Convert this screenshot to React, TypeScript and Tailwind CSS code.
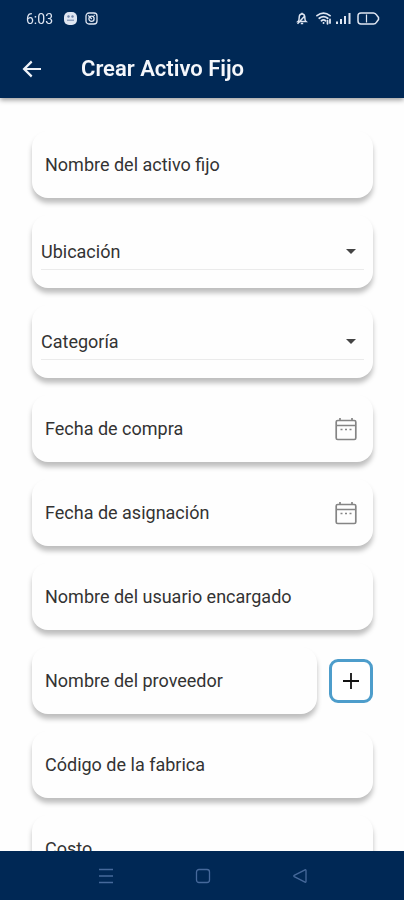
import type { ReactNode } from "react";

type Field = {
  name: string;
  label: string;
  kind: "text" | "select" | "date" | "add";
};

const fields: Field[] = [
  { name: "nombre", label: "Nombre del activo fijo", kind: "text" },
  { name: "ubicacion", label: "Ubicación", kind: "select" },
  { name: "categoria", label: "Categoría", kind: "select" },
  { name: "compra", label: "Fecha de compra", kind: "date" },
  { name: "asignacion", label: "Fecha de asignación", kind: "date" },
  { name: "encargado", label: "Nombre del usuario encargado", kind: "text" },
  { name: "proveedor", label: "Nombre del proveedor", kind: "add" },
  { name: "codigo", label: "Código de la fabrica", kind: "text" },
  { name: "costo", label: "Costo", kind: "text" },
];

function StatusBar() {
  return (
    <div className="flex h-9 items-center justify-between pr-6 pl-[26px] pt-px text-[#dfe6f2]">
      <div className="flex items-center gap-2">
        <span className="w-[30px] text-sm">6:03</span>
        <svg className="h-[13px] w-[13px]" viewBox="0 0 13 13">
          <rect width="13" height="13" rx="5" fill="currentColor" />
          <circle cx="4.5" cy="4.5" r="1.2" fill="#6f85a8" />
          <circle cx="8.5" cy="4.5" r="1.2" fill="#6f85a8" />
          <path d="M3 8.2h7" stroke="#6f85a8" strokeWidth="1" />
        </svg>
        <svg
          className="h-[13px] w-[13px]"
          viewBox="0 0 13 13"
          fill="none"
          stroke="currentColor"
          strokeWidth="1.3"
        >
          <rect x="1" y="1" width="11" height="11" rx="3" />
          <circle cx="6.5" cy="6.8" r="2.6" />
          <path d="M3.2 3.4l3.6 3.6M8.6 3.4h1.2" />
        </svg>
      </div>

      <div className="flex items-center gap-1">
        {/* Muted bell */}
        <svg
          className="h-[13px] w-3"
          viewBox="0 0 12 13"
          fill="none"
          stroke="currentColor"
          strokeWidth="1.5"
        >
          <path d="M2 9.5c1.2-1 1.2-2 1.2-4C3.2 3.4 4.4 2 6 2s2.8 1.4 2.8 3.5c0 2 0 3 1.2 4z" />
          <path d="M6 .8V2M4.8 11.6h2.4M1.5 11.8L8.8 4" />
        </svg>
        {/* Wi-Fi */}
        <svg
          className="ml-1 h-[13px] w-4"
          viewBox="0 0 16 13"
          fill="none"
          stroke="currentColor"
          strokeWidth="1.8"
          strokeLinecap="round"
        >
          <path d="M1 3.6C5 .6 10 .6 14 3.6M3.3 6.2c2.6-2 5.8-2 8.4 0M5.5 8.7c1.3-1 2.7-1 4 0" />
          <path d="M7.5 11h.1M11.5 11.8V8.6M14 7.5v3.5" />
        </svg>
        <svg className="h-[13px] w-4" viewBox="0 0 16 13" fill="currentColor">
          <rect x="0" y="9.5" width="2" height="2.5" />
          <rect x="4" y="7" width="2" height="5" />
          <rect x="8" y="4" width="2" height="8" />
          <rect x="12.5" y="1" width="2" height="11" />
        </svg>
        <svg
          className="h-[13px] w-6"
          viewBox="0 0 24 13"
          fill="none"
          stroke="currentColor"
          strokeWidth="1.5"
        >
          <path d="M5 1h12.500c2 0 2.500 1 3.500 2.500l1.500 2v2l-1.500 2C20 11 19.500 12 17.500 12H5c-2 0-3-1.200-3-3V4c0-1.800 1-3 3-3z" />
          <path d="M10.500 2.500v8" strokeWidth="1.2" />
        </svg>
      </div>
    </div>
  );
}

function Header() {
  return (
    <header className="z-10 shrink-0 bg-[#002855] shadow-[0_2px_5px_rgba(0,0,0,0.4)]">
      <StatusBar />
      <div className="flex h-[62px] items-center px-5 pt-1">
        <button type="button" aria-label="Volver" className="text-[#eef2f8]">
          <svg className="h-6 w-6" viewBox="0 0 24 24" fill="currentColor">
            <path d="M21 11H6.800l5.600-5.600L11 3.500 2.500 12l8.500 8.500 1.400-1.900L6.800 13H21z" />
          </svg>
        </button>
        <h1 className="ml-[37px] text-[22px] leading-7 font-semibold text-[#f5f7fb]">
          Crear Activo Fijo
        </h1>
      </div>
    </header>
  );
}

function Card({ children }: { children: ReactNode }) {
  return (
    <div className="min-w-0 flex-1 rounded-2xl bg-[#fefefe] shadow-[0_5px_5px_rgba(0,0,0,0.25)]">
      {children}
    </div>
  );
}

function SelectField({ field }: { field: Field }) {
  return (
    <Card>
      <div className="h-[73px] px-[9px] pt-[19px]">
        <div className="flex h-9 items-center border-b border-[#ebebeb] pr-2">
          <select
            name={field.name}
            aria-label={field.label}
            className="min-w-0 flex-1 appearance-none bg-transparent text-lg leading-6 text-[#333] outline-none"
          >
            <option>{field.label}</option>
          </select>
          <svg className="h-[5px] w-[10px]" viewBox="0 0 10 5" fill="#444">
            <path d="M0 0h10L5 5z" />
          </svg>
        </div>
      </div>
    </Card>
  );
}

function CalendarIcon() {
  return (
    <svg
      className="h-6 w-[22px]"
      viewBox="0 0 22 24"
      fill="none"
      stroke="#858585"
      strokeWidth="1.7"
    >
      <rect x="1.2" y="3.5" width="19.6" height="19" rx="1.5" />
      <path d="M1 8.5h20M5 3.5V1M17 3.5V1" />
      <path d="M5.5 12.5h2M10 12.5h2M14.5 12.5h2" />
    </svg>
  );
}

function TextField({ field }: { field: Field }) {
  return (
    <Card>
      <div className="flex h-[67px] items-center px-[13px]">
        <input
          type="text"
          name={field.name}
          aria-label={field.label}
          placeholder={field.label}
          className="min-w-0 flex-1 bg-transparent text-lg leading-6 text-[#222] outline-none placeholder:text-[#333]"
        />
        {field.kind === "date" && (
          <button type="button" aria-label="Abrir calendario" className="mr-[3px]">
            <CalendarIcon />
          </button>
        )}
      </div>
    </Card>
  );
}

function NavBar() {
  return (
    <nav className="flex h-[49px] shrink-0 items-center justify-center gap-[81px] bg-[#002855] pl-px text-[#46699b]">
      <button type="button" aria-label="Recientes">
        <svg
          className="h-4 w-4"
          viewBox="0 0 16 16"
          stroke="currentColor"
          strokeWidth="1.3"
        >
          <path d="M1 1.5h14M1 8h14M1 14.5h14" />
        </svg>
      </button>
      <button type="button" aria-label="Inicio">
        <svg
          className="h-4 w-4"
          viewBox="0 0 16 16"
          fill="none"
          stroke="currentColor"
          strokeWidth="1.3"
        >
          <rect x="1.5" y="1.5" width="13" height="13" rx="2.5" />
        </svg>
      </button>
      <button type="button" aria-label="Atrás">
        <svg
          className="h-4 w-4"
          viewBox="0 0 16 16"
          fill="none"
          stroke="currentColor"
          strokeWidth="1.3"
          strokeLinejoin="round"
        >
          <path d="M13 1.8L2.2 7.4c-.5.3-.5.9 0 1.2L13 14.2c.5.2 1 0 1-.6V2.4c0-.6-.5-.8-1-.6z" />
        </svg>
      </button>
    </nav>
  );
}

export default function App() {
  return (
    <div className="flex h-screen flex-col bg-white font-[Roboto,sans-serif]">
      <Header />

      <main className="min-h-0 flex-1 overflow-y-auto bg-[#fefefe] [scrollbar-width:none]">
        <form className="flex flex-col gap-[17px] pt-[33px] pr-[31px] pb-8 pl-8">
          {fields.map((field) => (
            <div key={field.name} className="flex items-center gap-3">
              {field.kind === "select" ? (
                <SelectField field={field} />
              ) : (
                <TextField field={field} />
              )}
              {field.kind === "add" && (
                <button
                  type="button"
                  aria-label="Agregar proveedor"
                  className="flex h-11 w-11 items-center justify-center rounded-[9px] border-3 border-[#4d9dcb] bg-white"
                >
                  <svg
                    className="h-4 w-4"
                    viewBox="0 0 16 16"
                    stroke="#111"
                    strokeWidth="1.8"
                  >
                    <path d="M8 0v16M0 8h16" />
                  </svg>
                </button>
              )}
            </div>
          ))}
        </form>
      </main>

      <NavBar />
    </div>
  );
}
